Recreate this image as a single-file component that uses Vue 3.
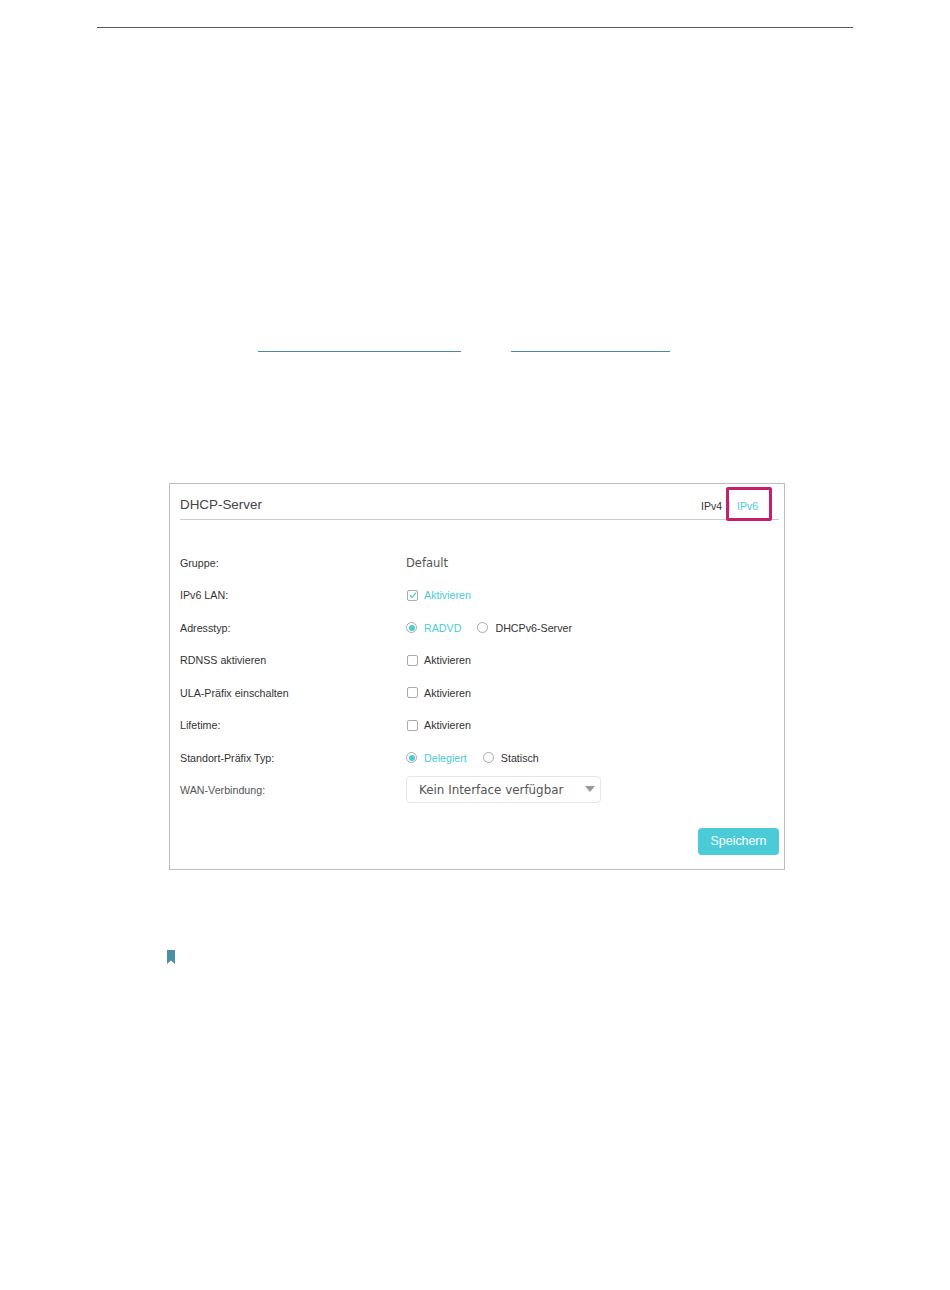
<template>
  <div class="page">
    <div class="top-rule"></div>

    <div class="links">
      <span class="link link-a"></span>
      <span class="link link-b"></span>
    </div>

    <section class="card">
      <header class="card-header">
        <h2>DHCP-Server</h2>
        <div class="tabs">
          <span>IPv4</span>
          <span class="sep"></span>
          <span class="active">IPv6</span>
        </div>
        <div class="highlight"></div>
      </header>

      <div class="rows">
        <div class="row">
          <label>Gruppe:</label>
          <span class="value">Default</span>
        </div>
        <div class="row">
          <label>IPv6 LAN:</label>
          <div class="control active">
            <span class="check checked">
              <svg width="8" height="8" viewBox="0 0 8 8"><path d="M1 4.2 3.2 6.3 7 1.6" fill="none" stroke="#4acbd6" stroke-width="1.2" /></svg>
            </span>
            Aktivieren
          </div>
        </div>
        <div class="row">
          <label>Adresstyp:</label>
          <div class="options">
            <div class="control active"><span class="radio on"></span>RADVD</div>
            <div class="control"><span class="radio"></span>DHCPv6-Server</div>
          </div>
        </div>
        <div v-for="name in checkRows" :key="name" class="row">
          <label>{{ name }}</label>
          <div class="control"><span class="check"></span>Aktivieren</div>
        </div>
        <div class="row">
          <label>Standort-Präfix Typ:</label>
          <div class="options">
            <div class="control active"><span class="radio on"></span>Delegiert</div>
            <div class="control"><span class="radio"></span>Statisch</div>
          </div>
        </div>
        <div class="row">
          <label class="muted">WAN-Verbindung:</label>
          <div class="select">
            Kein Interface verfügbar
            <span class="arrow"></span>
          </div>
        </div>
      </div>

      <div class="actions">
        <button>Speichern</button>
      </div>
    </section>

    <div class="note">
      <svg width="9" height="14" viewBox="0 0 9 14"><path d="M0 0H8V14L4 10.6 0 14Z" fill="#4a8fa3" /></svg>
    </div>
  </div>
</template>

<script setup>
const checkRows = ['RDNSS aktivieren', 'ULA-Präfix einschalten', 'Lifetime:']
</script>

<style>
html,
body {
  background: #fff;
}
</style>

<style scoped>
.page {
  width: 950px;
  height: 1290px;
  box-sizing: border-box;
  padding-top: 27px;
  font-family: "Liberation Sans", Arial, sans-serif;
  color: #333;
  overflow: hidden;
}

.top-rule {
  width: 756px;
  height: 1px;
  margin-left: 97px;
  background: #555;
}

.links {
  display: flex;
  margin: 323px 0 0 258px;
  gap: 50px;
}

.link {
  height: 1px;
  background: #4a8a9c;
}

.link-a {
  width: 203px;
}

.link-b {
  width: 159px;
}

.card {
  width: 616px;
  height: 387px;
  box-sizing: border-box;
  margin: 131px 0 0 169px;
  padding: 0 5px 0 10px;
  border: 1px solid #bdbdbd;
}

.card-header {
  position: relative;
  display: flex;
  justify-content: space-between;
  align-items: center;
  height: 35px;
  border-bottom: 1px solid #ccc;
}

.card-header h2 {
  margin: 6px 0 0;
  font-size: 13.4px;
  font-weight: 400;
  color: #444;
}

.tabs {
  display: flex;
  align-items: center;
  margin: 8px 21px 0 0;
  font-size: 10.5px;
  color: #333;
}

.sep {
  width: 1px;
  height: 10px;
  margin: 0 7px;
  background: #b9dfe4;
}

.tabs .active {
  color: #4acbd6;
}

.highlight {
  position: absolute;
  top: 3px;
  right: 7px;
  width: 46px;
  height: 34px;
  box-sizing: border-box;
  border: 3px solid #c4206e;
  border-radius: 2px;
}

.rows {
  display: flex;
  flex-direction: column;
  gap: 12.43px;
  margin-top: 33px;
}

.row {
  display: grid;
  grid-template-columns: 226px 1fr;
  grid-template-rows: 20px;
  align-items: center;
  font-size: 10.7px;
}

.muted {
  color: #555;
}

.value {
  font-family: "DejaVu Sans", Verdana, sans-serif;
  font-size: 11.5px;
  color: #555;
}

.control {
  display: flex;
  align-items: center;
  gap: 7px;
  color: #333;
}

.control.active {
  color: #4acbd6;
}

.options {
  display: flex;
  gap: 16px;
}

.check {
  display: flex;
  align-items: center;
  justify-content: center;
  box-sizing: border-box;
  width: 11px;
  height: 11px;
  margin-left: 1px;
  margin-right: -1px;
  border: 1px solid #aaa;
  border-radius: 2px;
}

.radio {
  position: relative;
  box-sizing: border-box;
  width: 11px;
  height: 11px;
  border: 1px solid #aaa;
  border-radius: 50%;
}

.radio.on::after {
  content: "";
  position: absolute;
  inset: 1.5px;
  border-radius: 50%;
  background: #4acbd6;
}

.select {
  position: relative;
  width: 195px;
  height: 27px;
  box-sizing: border-box;
  padding-left: 12px;
  border: 1px solid #e6e6e6;
  border-radius: 4px;
  font-family: "DejaVu Sans", Verdana, sans-serif;
  font-size: 11.9px;
  line-height: 26px;
  color: #555;
}

.arrow {
  position: absolute;
  top: 9px;
  right: 5px;
  border-top: 6px solid #999;
  border-left: 5px solid transparent;
  border-right: 5px solid transparent;
}

.actions {
  display: flex;
  justify-content: flex-end;
  margin-top: 28px;
}

button {
  width: 81px;
  height: 27px;
  padding: 0;
  border: none;
  border-radius: 4px;
  background: #4acbd6;
  color: #fff;
  font-family: inherit;
  font-size: 12.4px;
}

.note {
  margin: 80px 0 0 167px;
  line-height: 0;
}
</style>
